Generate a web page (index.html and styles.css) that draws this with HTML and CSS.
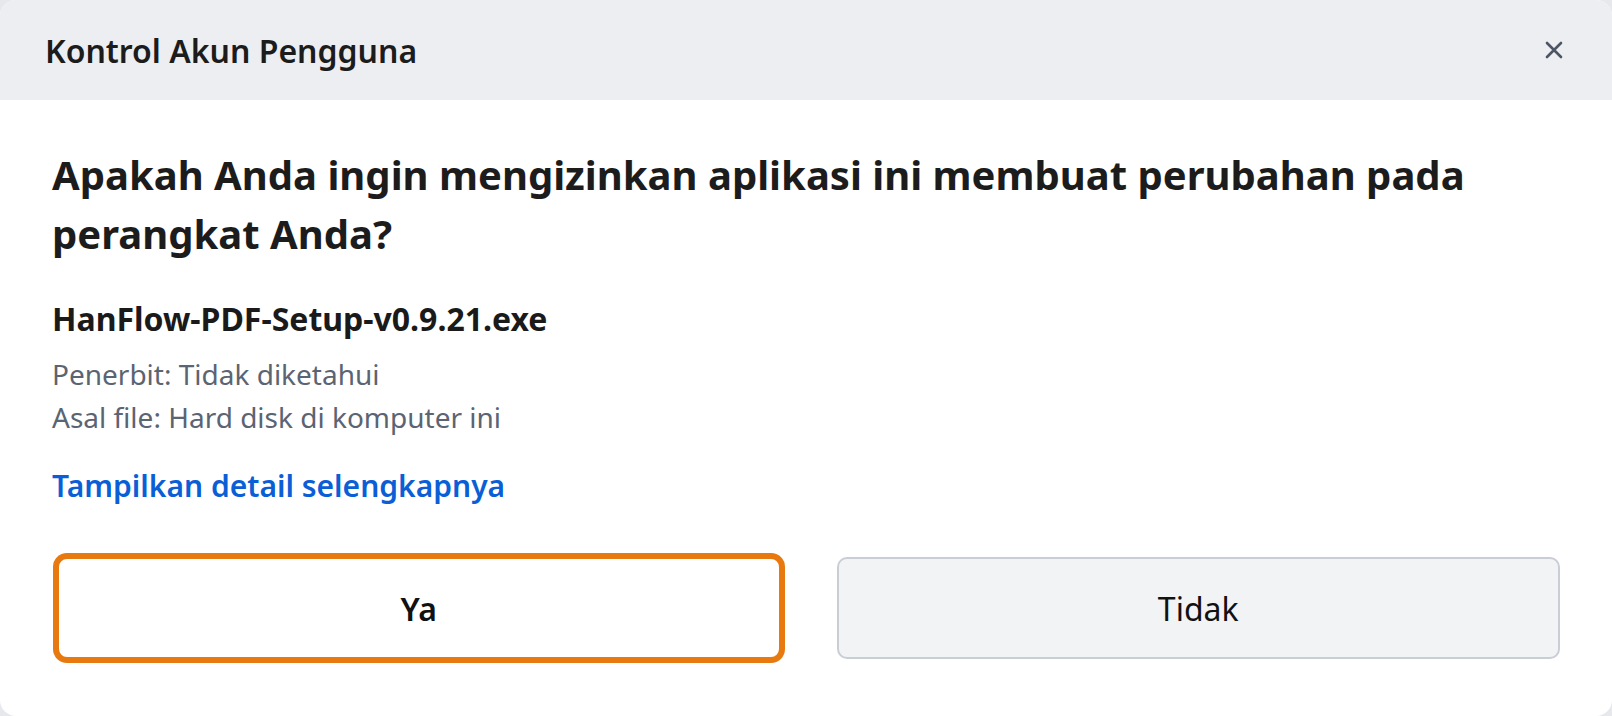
FILE: index.html
```html
<!DOCTYPE html>
<html lang="id">
<head>
    <meta charset="UTF-8">
    <meta name="viewport" content="width=device-width, initial-scale=1.0">
    <title>Kontrol Akun Pengguna</title>
    <link rel="stylesheet" href="styles.css">
</head>
<body>
    <div class="dialog">
        <div class="dialog-header">
            <span class="dialog-title">Kontrol Akun Pengguna</span>
            <button class="close-btn" aria-label="Tutup">
                <svg width="20" height="20" viewBox="0 0 20 20">
                    <path d="M3 3 L17 17 M17 3 L3 17" stroke="#4b5563" stroke-width="2.6" stroke-linecap="round"/>
                </svg>
            </button>
        </div>

        <div class="dialog-body">
            <h1>Apakah Anda ingin mengizinkan aplikasi ini membuat perubahan pada perangkat Anda?</h1>

            <div class="file-name">HanFlow-PDF-Setup-v0.9.21.exe</div>
            <div class="file-meta">
                <div>Penerbit: Tidak diketahui</div>
                <div>Asal file: Hard disk di komputer ini</div>
            </div>

            <a href="#" class="details-link">Tampilkan detail selengkapnya</a>

            <div class="actions">
                <button class="btn btn-yes">Ya</button>
                <button class="btn btn-no">Tidak</button>
            </div>
        </div>
    </div>
</body>
</html>
```

FILE: styles.css
```css
body {
    font-family: 'Noto Sans', 'Open Sans', sans-serif;
    color: #1a1a1a;
    background-color: #e6e8ec;
    margin: 0;
    padding: 0;
}
.dialog {
    background-color: white;
    border-radius: 16px;
    height: 100vh;
    overflow: hidden;
    display: flex;
    flex-direction: column;
}
.dialog-header {
    background-color: #edeef2;
    height: 100px;
    padding: 0 44px 0 45px;
    display: flex;
    align-items: center;
    justify-content: space-between;
    flex-shrink: 0;
}
.dialog-title {
    font-size: 32px;
    font-weight: 600;
    color: #1c1c1c;
}
.close-btn {
    background: none;
    border: none;
    padding: 4px;
    display: flex;
    cursor: pointer;
}
.dialog-body {
    padding: 45px 52px 0 52px;
}
h1 {
    font-size: 40px;
    font-weight: 700;
    line-height: 59px;
    margin: 0;
    color: #1c1c1c;
}
.file-name {
    font-size: 32px;
    font-weight: 700;
    line-height: 36px;
    margin-top: 38px;
}
.file-meta {
    font-size: 28px;
    line-height: 43px;
    color: #5b6472;
    margin-top: 16px;
}
.details-link {
    display: inline-block;
    font-size: 30px;
    font-weight: 600;
    line-height: 36px;
    color: #0b5fd6;
    text-decoration: none;
    margin-top: 29px;
}
.actions {
    display: grid;
    grid-template-columns: 1fr 1fr;
    gap: 56px;
    margin-top: 53px;
    padding-left: 5px;
}
.btn {
    font-family: inherit;
    font-size: 32px;
    height: 102px;
    border-radius: 10px;
    color: #111;
    cursor: pointer;
}
.btn-yes {
    background-color: white;
    font-weight: 600;
    border: 2px solid #e8790f;
    box-shadow: 0 0 0 4px #e8790f;
}
.btn-no {
    background-color: #f2f3f5;
    border: 2px solid #c9ced6;
}
```
